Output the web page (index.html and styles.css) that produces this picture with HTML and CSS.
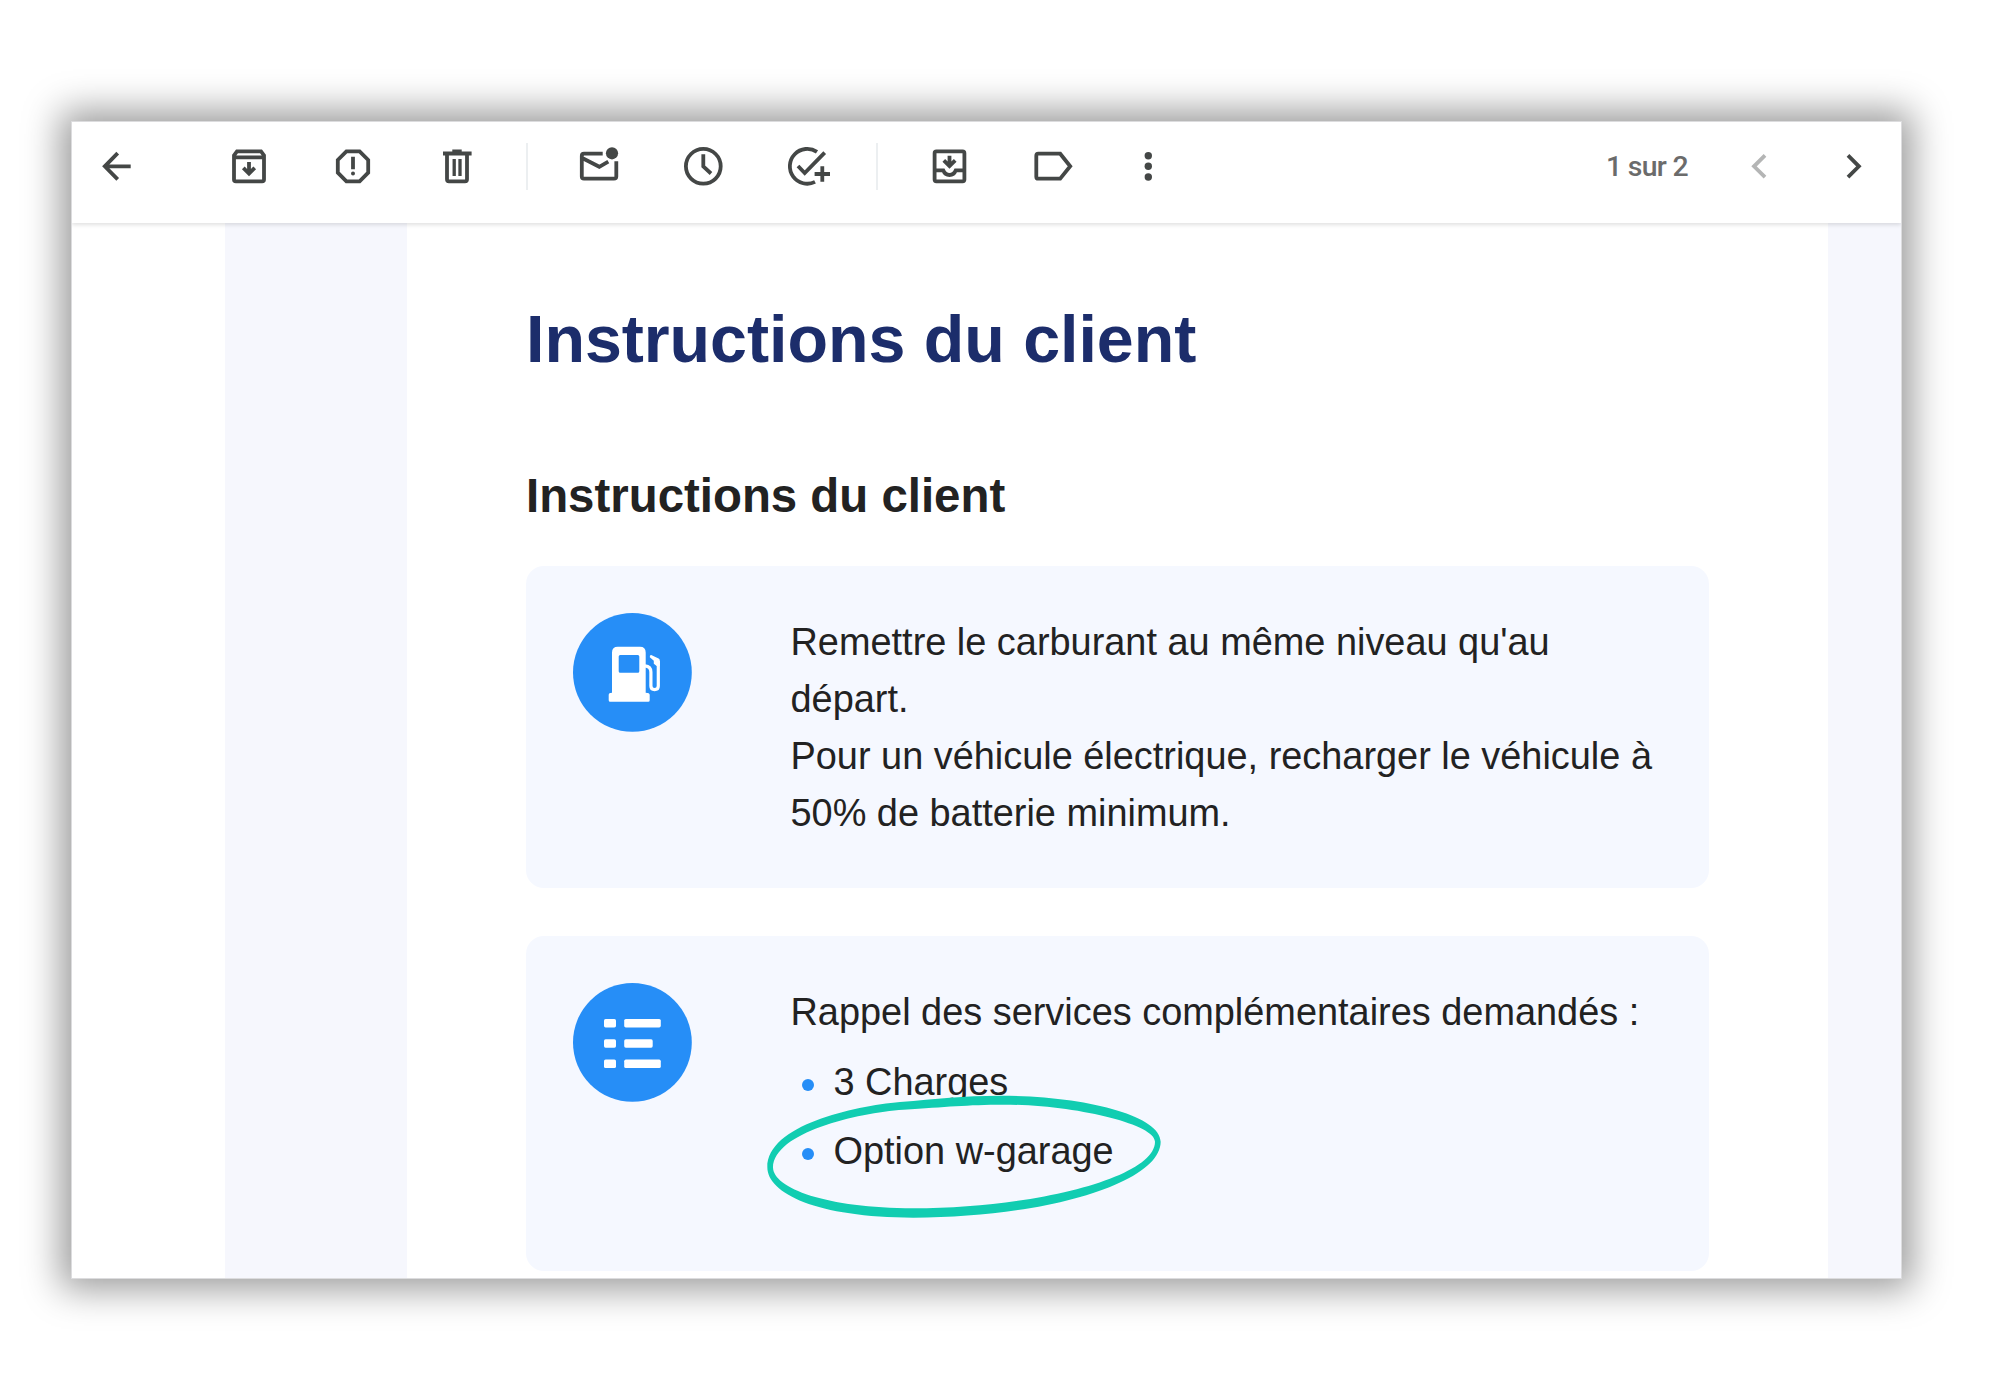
FILE: index.html
```html
<!DOCTYPE html>
<html lang="fr">
<head>
<meta charset="utf-8">
<title>Instructions du client</title>
<link rel="stylesheet" href="styles.css">
</head>
<body>
<main class="window">
  <header class="toolbar">
    <svg class="icon back" viewBox="0 0 48 48"><path d="M37.7 24.3H12M24.7 11.2 11.8 24.3 24.7 37.4"/></svg>
    <svg class="icon" viewBox="0 0 48 48"><path d="M9 15V13.4L12 9.4H36L39 13.4V37.4Q39 39.3 37.1 39.3H10.9Q9 39.3 9 37.4ZM9 15.4H39M24 20V31M18.3 25.8 24 31.5 29.7 25.8"/></svg>
    <svg class="icon" viewBox="0 0 48 48"><path d="M17.4 9.4H30.6L39.2 18V30.6L30.6 39.3H17.4L8.8 30.6V18ZM24 14.7V27.2"/><circle class="solid" cx="24" cy="31.4" r="2"/></svg>
    <svg class="icon" viewBox="0 0 48 48"><path d="M14 12V37.3Q14 39.3 16 39.3H32Q34 39.3 34 37.3V12M10 11.5H38.6M19.3 9.4H28.7"/><path class="bars" d="M21.2 17V34M27 17V34"/></svg>
    <span class="divider"></span>
    <svg class="icon" viewBox="0 0 48 48"><path d="M27.7 11.7H9Q6.8 11.7 6.8 13.9V34.6Q6.8 36.7 9 36.7H39Q41.3 36.7 41.3 34.6V19.3M7.2 16 24.3 24.8 33.3 19.6"/><circle class="solid" cx="37" cy="11.3" r="6.1"/></svg>
    <svg class="icon" viewBox="0 0 48 48"><circle cx="24.3" cy="24.3" r="17.4"/><path d="M24.3 12.3V24.4L32 31.5"/></svg>
    <svg class="icon" viewBox="0 0 48 48"><path d="M34 9.9A17.4 17.4 0 1 0 32 39.9M15 24 21.7 31 41.7 10.6M39.3 24.3V39.7M31.6 32H47"/></svg>
    <span class="divider"></span>
    <svg class="icon" viewBox="0 0 48 48"><rect x="9.6" y="9.4" width="29.8" height="29.9" rx="1.8"/><path d="M10 28.3H18.2Q20 33 24.5 33T30.8 28.3H39M24.5 13.7V23.5M18.8 18.4 24.5 24.1 30.2 18.4"/></svg>
    <svg class="icon" viewBox="0 0 48 48"><path d="M9.3 11.7H31.2L41.2 24.3 31.2 36.7H9.3Q7.3 36.7 7.3 34.7V13.7Q7.3 11.7 9.3 11.7Z"/></svg>
    <svg class="icon more" viewBox="0 0 48 48"><g class="solid"><circle cx="24.3" cy="13.7" r="3.7"/><circle cx="24.3" cy="24.3" r="3.7"/><circle cx="24.3" cy="35" r="3.7"/></g></svg>
    <span class="count">1 sur 2</span>
    <svg class="icon prev" viewBox="0 0 48 48"><path d="M29 13.4 18 24.3 29 35.2"/></svg>
    <svg class="icon next" viewBox="0 0 48 48"><path d="M18 13.4 28.9 24.3 18 35.2"/></svg>
  </header>
  <div class="mail">
    <article class="sheet">
      <h1>Instructions du client</h1>
      <h2>Instructions du client</h2>
      <section class="card">
        <svg class="badge" viewBox="0 0 119 119"><circle class="disc" cx="59.4" cy="59.4" r="59.4"/><path class="glyph" fill-rule="evenodd" d="M39 79.7V39.5Q39 33.7 44.8 33.7H67Q72.7 33.7 72.7 39.5V79.7Q76.7 79.7 76.7 82V87.2Q76.7 88.7 75.2 88.7H37.2Q35.7 88.7 35.7 87.2V82Q35.7 79.7 39 79.7ZM47.2 42Q45.7 42 45.7 43.5V58.2Q45.7 59.7 47.2 59.7H64.8Q66.3 59.7 66.3 58.2V43.5Q66.3 42 64.8 42Z"/><path class="hose" d="M72 52.9Q77.9 53.5 77.9 59V73Q77.9 76.6 81.6 76.6T85.3 73V48"/><path class="glyph" d="M78.2 42 85.6 45.4Q86.8 46 86.8 47.4V53H83.7L80.8 50.8V47.8L76.8 44.2Q76.5 42 78.2 42Z"/></svg>
        <p>Remettre le carburant au même niveau qu'au départ.<br>Pour un véhicule électrique, recharger le véhicule à 50% de batterie minimum.</p>
      </section>
      <section class="card reminders">
        <svg class="badge" viewBox="0 0 119 119"><circle class="disc" cx="59.4" cy="59.4" r="59.4"/><g class="glyph"><rect x="31" y="36" width="12" height="8.4" rx="1.6"/><rect x="51.2" y="36" width="36.6" height="8.4" rx="1.6"/><rect x="31" y="56.3" width="12" height="8.4" rx="1.6"/><rect x="51.2" y="56.3" width="28.5" height="8.4" rx="1.6"/><rect x="31" y="76.6" width="12" height="8.4" rx="1.6"/><rect x="51.2" y="76.6" width="36.6" height="8.4" rx="1.6"/></g></svg>
        <div>
          <p>Rappel des services complémentaires demandés :</p>
          <ul>
            <li>3 Charges</li>
            <li>Option w-garage</li>
          </ul>
        </div>
        <svg class="marker" viewBox="0 0 1320 540"><path fill-rule="evenodd" d="M52 322C52 195 310 139 450 126C560 117 640 107 750 107C1000 107 1232 165 1232 245C1232 370 880 473 490 473C200 473 52 400 52 322ZM69 322C72 217 320 159 460 149C590 141 650 134 760 134C970 134 1215 192 1215 245C1215 353 850 445 490 445C230 445 69 385 69 322Z"/></svg>
      </section>
    </article>
  </div>
</main>
</body>
</html>
```
FILE: styles.css
```css
* {
  box-sizing: border-box;
}

body {
  margin: 0;
  height: 1400px;
  padding: 121px 98px 121px 71px;
  background: #fff;
  font-family: "Liberation Sans", Arial, sans-serif;
  color: #222;
  overflow: hidden;
}

.window {
  display: flex;
  flex-direction: column;
  height: 1158px;
  border: 1px solid #dcdcde;
  background: #fff;
  box-shadow: 0 0 35px 10px rgba(0, 0, 0, 0.4);
  overflow: hidden;
}

.toolbar {
  display: flex;
  flex: none;
  gap: 56px;
  height: 101px;
  padding: 20px 23px 0 21px;
  position: relative;
  background: #fff;
  box-shadow: 0 2px 4px rgba(0, 0, 0, 0.12);
}

.icon {
  flex: none;
  width: 48px;
  height: 48px;
  fill: none;
  stroke: #444746;
  stroke-width: 3.8;
}

.icon .solid {
  fill: #444746;
  stroke: none;
}

.icon .bars {
  stroke-width: 3.3;
}

.back {
  margin-right: 28px;
}

.divider {
  flex: none;
  width: 2px;
  height: 47px;
  margin: 1px -9px 0 -11px;
  background: #eceff1;
}

.more {
  margin-left: -9px;
}

.count {
  margin-left: auto;
  margin-right: -8px;
  font: 500 28.4px/49px Roboto, sans-serif;
  letter-spacing: -0.7px;
  color: #6b6b6b;
}

.icon.prev {
  stroke: #b4b5b5;
}

.next {
  margin-left: -10px;
}

.mail {
  flex: 1;
  min-height: 0;
  margin-left: 153px;
  padding: 0 73px 0 182px;
  background: #f6f7fd;
}

.sheet {
  height: 100%;
  padding: 76px 119px 0;
  background: #fff;
}

h1 {
  margin: 0;
  font-size: 66.4px;
  line-height: 80px;
  letter-spacing: -0.05px;
  color: #1c2d6b;
}

h2 {
  margin: 86px 0 39px;
  font-size: 47.4px;
  line-height: 62px;
}

.card {
  display: flex;
  gap: 98.5px;
  height: 322px;
  padding: 47px 47px 0;
  border-radius: 18px;
  background: #f5f8ff;
  font-size: 37.9px;
  line-height: 56.9px;
}

.reminders {
  position: relative;
  height: 335px;
  margin-top: 47.5px;
}

.badge {
  flex: none;
  width: 119px;
  height: 119px;
}

.disc {
  fill: #268ef7;
}

.glyph {
  fill: #fff;
}

.hose {
  fill: none;
  stroke: #fff;
  stroke-width: 3.2;
}

p {
  margin: 0;
  padding-top: 1px;
}

ul {
  display: flex;
  flex-direction: column;
  gap: 12px;
  margin: 14px 0 0;
  padding: 0 0 0 11.5px;
  list-style: none;
}

li {
  display: flex;
  align-items: center;
  gap: 19.5px;
}

li::before {
  content: "";
  width: 12px;
  height: 12px;
  margin-top: 4px;
  border-radius: 50%;
  background: #268ef7;
}

.marker {
  position: absolute;
  left: 224px;
  top: 124.5px;
  width: 440px;
  height: 180px;
  fill: #11cdb1;
}
```
